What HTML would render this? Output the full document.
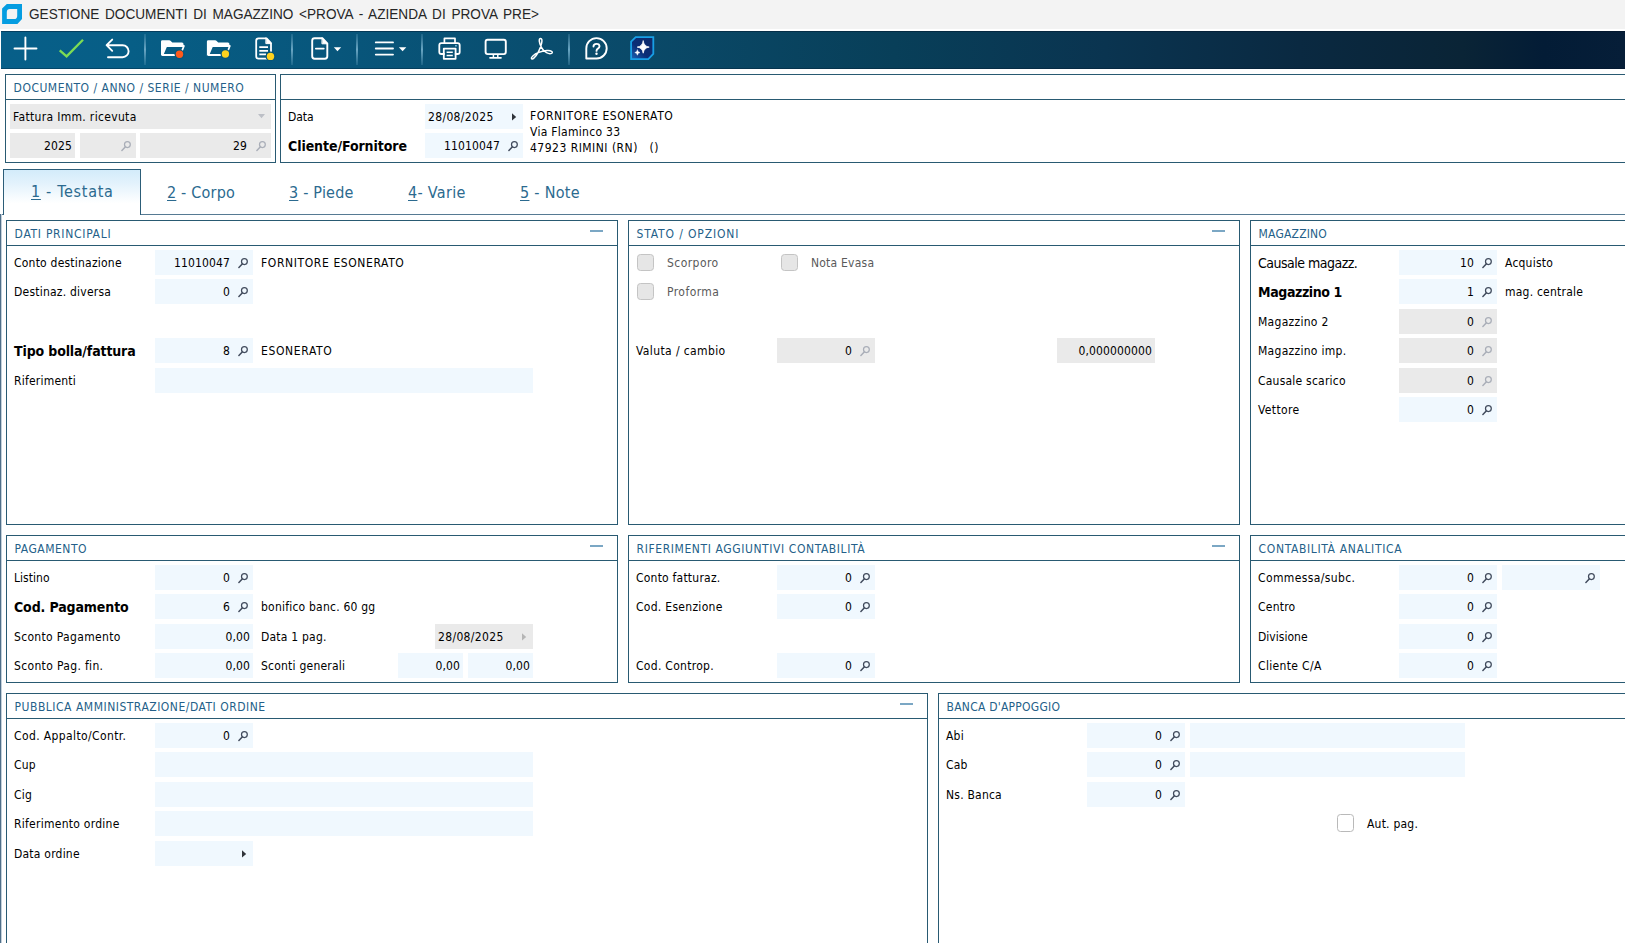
<!DOCTYPE html>
<html lang="it"><head><meta charset="utf-8"><title>GESTIONE DOCUMENTI DI MAGAZZINO</title>
<style>
html,body{margin:0;padding:0}
body{width:1625px;height:943px;overflow:hidden;background:#fff;position:relative;
 font-family:"DejaVu Sans Condensed","Liberation Sans",sans-serif;font-size:12px;color:#000;letter-spacing:.22px}
div,span,svg{position:absolute;box-sizing:border-box;white-space:nowrap}
#tb{left:0;top:0;width:1625px;height:29px;background:#f3f3f3}
#tt{left:29px;top:3px;font-family:"Liberation Sans",sans-serif;font-size:15.5px;letter-spacing:0;word-spacing:2.2px;color:#262626;line-height:22.5px;transform:scaleX(.878);transform-origin:0 0}
#bar{left:1px;top:31px;width:1624px;height:38px;box-shadow:inset 0 1px 0 rgba(0,15,35,.4),inset 0 -1px 0 rgba(0,15,35,.3);background:linear-gradient(90deg,#075f89 0,#075e86 8%,#08557a 22%,#0a4968 40%,#083f59 55%,#0a3450 68%,#0a2941 80%,#0a2436 90%,#031c36 95%,#061e38 100%)}
.sep{top:34px;width:2px;height:32px;background:linear-gradient(90deg,#4f8aa6,#2d6f8f)}
.p{border:1px solid #295a72;background:#fff}
.ph{left:7.6px;top:0;height:24px;line-height:27px;color:#245f89;letter-spacing:.55px;width:auto;right:0;border:0}
.p:after{content:"";position:absolute;left:0;right:0;top:24px;height:1px;background:#295a72}
.col{right:14px;top:9px;width:13px;height:2px;background:#7ba7c4}
.f{overflow:hidden}
.v{top:0;line-height:27px;letter-spacing:.13px}
.l{line-height:27px;height:25px}
.b{line-height:27px;height:25px;font-weight:bold;font-size:14px;letter-spacing:-.2px}
.big{line-height:27px;height:25px;font-size:14px;letter-spacing:-.1px}
.d{line-height:27px;height:25px;letter-spacing:.45px}
.g{line-height:27px;height:25px;color:#5a5a5a}
.tab{top:170px;height:44px;line-height:44px;font-size:16px;color:#2b6a8f;letter-spacing:.15px}
.tab u{text-decoration-thickness:1px;text-underline-offset:2px}
.cb{width:17.8px;height:17.8px;border:1px solid #c4c4c4;border-radius:3.5px;background:#e6e6e6}
</style></head><body>

<div id="tb"></div>
<svg style="left:0;top:0" width="24" height="28" viewBox="0 0 24 28"><path fill="#059de1" fill-rule="evenodd" d="M6.8 4 H22 V18.9 L17.4 23.9 H2.1 V8.6 Z M9.9 9.1 Q6.8 9.1 6.8 12.2 V19.1 H14.1 Q17.2 19.1 17.2 16 V9.1 Z"/></svg>
<div id="tt">GESTIONE DOCUMENTI DI MAGAZZINO &lt;PROVA - AZIENDA DI PROVA PRE&gt;</div>
<div id="bar"></div>
<svg style="left:0;top:31px" width="700" height="38" viewBox="0 31 700 38" fill="none" stroke="#fff" stroke-width="2" stroke-linecap="round" stroke-linejoin="round">
<defs>
<linearGradient id="sg" x1="0" y1="0" x2="0" y2="1"><stop offset="0" stop-color="#5f9dbb" stop-opacity=".25"/><stop offset=".5" stop-color="#6aa6c3"/><stop offset="1" stop-color="#5f9dbb" stop-opacity=".25"/></linearGradient>
<linearGradient id="ai" x1="0" y1="1" x2="1" y2="0"><stop offset="0" stop-color="#1d66b8"/><stop offset=".4" stop-color="#0a2e78"/><stop offset="1" stop-color="#0f2a68"/></linearGradient>
</defs>
<g stroke="none" fill="url(#sg)">
<rect x="144" y="34" width="2" height="31"/><rect x="291" y="34" width="2" height="31"/><rect x="356" y="34" width="2" height="31"/><rect x="421" y="34" width="2" height="31"/><rect x="568" y="34" width="2" height="31"/>
</g>
<!-- plus -->
<path d="M14.5 48.5 H36.5 M25.4 37.5 V59.5" stroke-width="1.9"/>
<!-- check -->
<path d="M60.6 51.2 L66.6 56.4 L82.2 40.6" stroke="#7ddc55" stroke-width="2.3" stroke-linecap="square" stroke-linejoin="miter"/>
<!-- undo -->
<path d="M112.2 39.6 L106.6 45.2 L112.2 50.8 M107 45.2 H122.6 A6 6 0 0 1 122.6 57.2 H108" stroke-width="1.9"/>
<!-- folder red -->
<g id="fold">
<path d="M161 41.6 Q161 40.2 162.4 40.2 H169.3 Q170 40.2 170.5 40.7 L172.3 42.4 H182 Q183.5 42.4 183.5 43.9 V45.6 H166.2 L162.6 54.6 L161 55.8 Z" fill="#fff" stroke="none"/>
<path d="M166.3 46 H183.9 L180.3 55 H162.5 Z" stroke-width="1.8" stroke-linejoin="round"/>
</g>
<circle cx="179.5" cy="54.3" r="4.9" fill="#07567b" stroke="none"/>
<circle cx="179.5" cy="54.3" r="3.7" fill="#ff5a1c" stroke="none"/>
<use href="#fold" x="45.9"/>
<circle cx="225.4" cy="54" r="4.9" fill="#07547a" stroke="none"/>
<circle cx="225.4" cy="54" r="3.7" fill="#ffd21e" stroke="none"/>
<!-- doc yellow -->
<path d="M266.6 38.3 H258.6 Q256.2 38.3 256.2 40.7 V56.3 Q256.2 58.7 258.6 58.7 H268.6 Q271 58.7 271 56.3 V43.2 Z" stroke-width="1.8"/>
<path d="M266.2 38 L271.3 43.6 H266.2Z" fill="#fff" stroke-width="1"/>
<path d="M259.3 47.2 H268 M259.3 50.8 H268 M259.3 54.3 H266" stroke-width="1.7" stroke-linecap="butt"/>
<circle cx="270.5" cy="56.4" r="4.9" fill="#075479" stroke="none"/>
<circle cx="270.5" cy="56.4" r="3.7" fill="#ffd21e" stroke="none"/>
<!-- doc dropdown -->
<path d="M322.6 38.3 H314.6 Q312.2 38.3 312.2 40.7 V56.3 Q312.2 58.7 314.6 58.7 H324.9 Q327.3 58.7 327.3 56.3 V43.4 Z" stroke-width="1.9"/>
<path d="M322.3 38 L327.6 43.8 H322.3Z" fill="#fff" stroke-width="1"/>
<path d="M315.8 48.6 H323.8" stroke-width="1.7"/>
<path d="M333.8 47.2 H341.2 L337.5 51.3Z" fill="#fff" stroke="none"/>
<!-- hamburger -->
<path d="M375.8 42.4 H393 M375.8 48.5 H393 M375.8 54.6 H393" stroke-width="1.9"/>
<path d="M398.9 47.2 H406.3 L402.6 51.3Z" fill="#fff" stroke="none"/>
<!-- printer -->
<path d="M444.4 42.6 V38.4 H455 V42.6" stroke-width="1.7"/>
<path d="M444 54 H441.4 Q439.3 54 439.3 51.9 V45.2 Q439.3 43.1 441.4 43.1 H457.6 Q459.7 43.1 459.7 45.2 V51.9 Q459.7 54 457.6 54 H455.6" stroke-width="1.8"/>
<rect x="443.8" y="48.6" width="11.8" height="10.2" stroke-width="1.8"/>
<path d="M446.6 52.3 H452.8 M446.6 55.4 H452.8" stroke-width="1.5" stroke-linecap="butt"/>
<rect x="455.2" y="45" width="1.5" height="1.5" fill="#8fd0f5" stroke="none"/>
<!-- monitor -->
<rect x="485.6" y="39.7" width="20.2" height="14.4" rx="2" stroke-width="1.9"/>
<path d="M493.4 54.5 V57 M497.8 54.5 V57" stroke-width="1.5" stroke-linecap="butt"/>
<path d="M490 57.8 H501" stroke-width="1.7"/>
<!-- acrobat -->
<path d="M540.6 38.4 C538.6 38.4 538.9 42.6 541.4 47.3 C544 52.2 549 54.6 551.6 53.3 C553.6 52.2 551.2 50.2 546.8 50.6 C541.5 51.1 535.6 53.5 532.6 56.2 C530.2 58.4 531.6 59.9 533.6 58.3 C537 55.6 540.4 48.6 541.6 43.4 C542.3 40.2 541.9 38.4 540.6 38.4Z" stroke-width="1.5"/>
<!-- help -->
<path d="M586.3 58.5 V48.4 A10.2 10.2 0 1 1 596.5 58.5 Z" stroke-width="1.9"/>
<path d="M593.5 46.5 Q593.5 43.9 596.5 43.9 Q599.5 43.9 599.5 46.3 Q599.5 47.8 597.9 48.7 Q596.5 49.5 596.5 50.9" stroke-width="1.9"/>
<circle cx="596.5" cy="53.8" r="1.2" fill="#fff" stroke="none"/>
<!-- AI -->
<path d="M635.7 37.1 H653.3 V53.9 L648.3 59.1 H631.1 V41.7Z" fill="url(#ai)" stroke="#189fe6" stroke-width="1.8" stroke-linejoin="miter"/>
<path d="M643.2 41 Q643.9 46.4 649.2 47.1 Q643.9 47.8 643.2 53.2 Q642.5 47.8 637.2 47.1 Q642.5 46.4 643.2 41Z" fill="#fff" stroke="#fff" stroke-width=".8"/>
<path d="M637.4 50 Q637.7 52.3 640 52.6 Q637.7 52.9 637.4 55.2 Q637.1 52.9 634.8 52.6 Q637.1 52.3 637.4 50Z" fill="#fff" stroke="#fff" stroke-width=".5"/>
</svg>

<div class="p" style="left:5px;top:74px;width:271px;height:89px;"><div class="ph" style="letter-spacing:0.492px;">DOCUMENTO / ANNO / SERIE / NUMERO</div></div>
<div class="p" style="left:280px;top:74px;width:1350px;height:89px;border-right:none;"><div class="ph" style=""></div></div>
<div class="f " style="left:10px;top:104px;width:261px;height:25px;background:#eaeaea"><span class="v" style="left:3px;letter-spacing:0.330px;">Fattura Imm. ricevuta</span></div>
<svg class="mg" style="left:258px;top:114px" width="7" height="5" viewBox="0 0 7 5"><path d="M0 0 H7 L3.5 4.2Z" fill="#bcbfc6"/></svg>
<div class="f " style="left:10px;top:133px;width:65px;height:25px;background:#eaeaea"><span class="v" style="right:3px">2025</span></div>
<div class="f " style="left:80px;top:133px;width:56px;height:25px;background:#eaeaea"></div><svg class="mg" style="left:121px;top:141px" width="11" height="11" viewBox="0 0 11 11"><circle cx="6.4" cy="3.6" r="2.9" fill="none" stroke="#a9aeb8" stroke-width="1.25"/><path d="M4.2 5.9 L0.9 9.5" stroke="#a9aeb8" stroke-width="1.45" stroke-linecap="round"/></svg>
<div class="f " style="left:140px;top:133px;width:131px;height:25px;background:#eaeaea"><span class="v" style="right:24px">29</span></div><svg class="mg" style="left:256px;top:141px" width="11" height="11" viewBox="0 0 11 11"><circle cx="6.4" cy="3.6" r="2.9" fill="none" stroke="#a9aeb8" stroke-width="1.25"/><path d="M4.2 5.9 L0.9 9.5" stroke="#a9aeb8" stroke-width="1.45" stroke-linecap="round"/></svg>
<div class="l" style="left:288px;top:104px;letter-spacing:-0.030px;">Data</div>
<div class="f " style="left:425px;top:104px;width:98px;height:25px;background:#f0f8fe"><span class="v" style="left:3px;letter-spacing:0.340px;">28/08/2025</span></div>
<svg class="mg" style="left:512px;top:113px" width="5" height="8" viewBox="0 0 5 8"><path d="M0 0.2 L4.2 3.9 L0 7.6Z" fill="#30343a"/></svg>
<div class="b" style="left:288px;top:133px;letter-spacing:-0.076px;">Cliente/Fornitore</div>
<div class="f " style="left:425px;top:133px;width:98px;height:25px;background:#f0f8fe"><span class="v" style="right:23px">11010047</span></div><svg class="mg" style="left:508px;top:141px" width="11" height="11" viewBox="0 0 11 11"><circle cx="6.4" cy="3.6" r="2.9" fill="none" stroke="#414b5d" stroke-width="1.25"/><path d="M4.2 5.9 L0.9 9.5" stroke="#414b5d" stroke-width="1.45" stroke-linecap="round"/></svg>
<div class="d" style="left:530px;top:108px;line-height:16px;height:16px;letter-spacing:0.608px;">FORNITORE ESONERATO</div>
<div class="l" style="left:530px;top:124px;line-height:16px;height:16px;letter-spacing:0.287px;">Via Flaminco 33</div>
<div class="l" style="left:530px;top:140px;line-height:16px;height:16px;letter-spacing:0.484px;">47923 RIMINI (RN)&nbsp;&nbsp;&nbsp;()</div>
<div style="left:0;top:214px;width:1625px;height:1px;background:#567a93"></div>
<div style="left:0;top:214px;width:1px;height:740px;background:#4f6f8a"></div><div style="left:1px;top:214px;width:1px;height:740px;background:#c3d0da"></div>
<div style="left:3px;top:169px;width:138px;height:46px;border:1px solid #2c5d78;border-bottom:none;background:linear-gradient(180deg,#d3ebfa 0,#e3f2fc 30%,#f6fbfe 60%,#fff 74%)"></div>
<div class="tab" style="left:31px;top:170px;letter-spacing:0.695px;"><u>1</u> - Testata</div>
<div class="tab" style="left:167px;top:171px;letter-spacing:0.194px;"><u>2</u> - Corpo</div>
<div class="tab" style="left:289px;top:171px;letter-spacing:0.217px;"><u>3</u> - Piede</div>
<div class="tab" style="left:408px;top:171px;letter-spacing:0.312px;"><u>4</u>- Varie</div>
<div class="tab" style="left:520px;top:171px;letter-spacing:0.300px;"><u>5</u> - Note</div>
<div class="p" style="left:6px;top:220px;width:612px;height:305px;"><div class="ph" style="letter-spacing:0.710px;">DATI PRINCIPALI</div><div class="col"></div></div>
<div class="l" style="left:14px;top:250px;">Conto destinazione</div>
<div class="f " style="left:155px;top:250px;width:98px;height:25px;background:#f0f8fe"><span class="v" style="right:23px">11010047</span></div><svg class="mg" style="left:238px;top:258px" width="11" height="11" viewBox="0 0 11 11"><circle cx="6.4" cy="3.6" r="2.9" fill="none" stroke="#414b5d" stroke-width="1.25"/><path d="M4.2 5.9 L0.9 9.5" stroke="#414b5d" stroke-width="1.45" stroke-linecap="round"/></svg>
<div class="d" style="left:261px;top:250px;letter-spacing:0.608px;">FORNITORE ESONERATO</div>
<div class="l" style="left:14px;top:279px;">Destinaz. diversa</div>
<div class="f " style="left:155px;top:279px;width:98px;height:25px;background:#f0f8fe"><span class="v" style="right:23px">0</span></div><svg class="mg" style="left:238px;top:287px" width="11" height="11" viewBox="0 0 11 11"><circle cx="6.4" cy="3.6" r="2.9" fill="none" stroke="#414b5d" stroke-width="1.25"/><path d="M4.2 5.9 L0.9 9.5" stroke="#414b5d" stroke-width="1.45" stroke-linecap="round"/></svg>
<div class="b" style="left:14px;top:338px;letter-spacing:-0.139px;">Tipo bolla/fattura</div>
<div class="f " style="left:155px;top:338px;width:98px;height:25px;background:#f0f8fe"><span class="v" style="right:23px">8</span></div><svg class="mg" style="left:238px;top:346px" width="11" height="11" viewBox="0 0 11 11"><circle cx="6.4" cy="3.6" r="2.9" fill="none" stroke="#414b5d" stroke-width="1.25"/><path d="M4.2 5.9 L0.9 9.5" stroke="#414b5d" stroke-width="1.45" stroke-linecap="round"/></svg>
<div class="d" style="left:261px;top:338px;letter-spacing:0.639px;">ESONERATO</div>
<div class="l" style="left:14px;top:368px;">Riferimenti</div>
<div class="f " style="left:155px;top:368px;width:378px;height:25px;background:#f0f8fe"></div>
<div class="p" style="left:628px;top:220px;width:612px;height:305px;"><div class="ph" style="letter-spacing:0.850px;">STATO / OPZIONI</div><div class="col"></div></div>
<div class="cb" style="left:636.6px;top:253.6px"></div>
<div class="g" style="left:667px;top:250px;letter-spacing:0.445px;">Scorporo</div>
<div class="cb" style="left:780.6px;top:253.6px"></div>
<div class="g" style="left:811px;top:250px;">Nota Evasa</div>
<div class="cb" style="left:636.6px;top:282.6px"></div>
<div class="g" style="left:667px;top:279px;letter-spacing:0.445px;">Proforma</div>
<div class="l" style="left:636px;top:338px;letter-spacing:0.387px;">Valuta / cambio</div>
<div class="f " style="left:777px;top:338px;width:98px;height:25px;background:#eaeaea"><span class="v" style="right:23px">0</span></div><svg class="mg" style="left:860px;top:346px" width="11" height="11" viewBox="0 0 11 11"><circle cx="6.4" cy="3.6" r="2.9" fill="none" stroke="#a9aeb8" stroke-width="1.25"/><path d="M4.2 5.9 L0.9 9.5" stroke="#a9aeb8" stroke-width="1.45" stroke-linecap="round"/></svg>
<div class="f " style="left:1057px;top:338px;width:98px;height:25px;background:#eaeaea"><span class="v" style="right:3px">0,000000000</span></div>
<div class="p" style="left:1250px;top:220px;width:400px;height:305px;border-right:none;"><div class="ph" style="letter-spacing:0.183px;">MAGAZZINO</div></div>
<div class="big" style="left:1258px;top:250px;letter-spacing:-0.507px;">Causale magazz.</div>
<div class="f " style="left:1399px;top:250px;width:98px;height:25px;background:#f0f8fe"><span class="v" style="right:23px">10</span></div><svg class="mg" style="left:1482px;top:258px" width="11" height="11" viewBox="0 0 11 11"><circle cx="6.4" cy="3.6" r="2.9" fill="none" stroke="#414b5d" stroke-width="1.25"/><path d="M4.2 5.9 L0.9 9.5" stroke="#414b5d" stroke-width="1.45" stroke-linecap="round"/></svg>
<div class="l" style="left:1505px;top:250px;">Acquisto</div>
<div class="b" style="left:1258px;top:279px;letter-spacing:-0.391px;">Magazzino 1</div>
<div class="f " style="left:1399px;top:279px;width:98px;height:25px;background:#f0f8fe"><span class="v" style="right:23px">1</span></div><svg class="mg" style="left:1482px;top:287px" width="11" height="11" viewBox="0 0 11 11"><circle cx="6.4" cy="3.6" r="2.9" fill="none" stroke="#414b5d" stroke-width="1.25"/><path d="M4.2 5.9 L0.9 9.5" stroke="#414b5d" stroke-width="1.45" stroke-linecap="round"/></svg>
<div class="l" style="left:1505px;top:279px;">mag. centrale</div>
<div class="l" style="left:1258px;top:309px;letter-spacing:0.284px;">Magazzino 2</div>
<div class="f " style="left:1399px;top:309px;width:98px;height:25px;background:#eaeaea"><span class="v" style="right:23px">0</span></div><svg class="mg" style="left:1482px;top:317px" width="11" height="11" viewBox="0 0 11 11"><circle cx="6.4" cy="3.6" r="2.9" fill="none" stroke="#a9aeb8" stroke-width="1.25"/><path d="M4.2 5.9 L0.9 9.5" stroke="#a9aeb8" stroke-width="1.45" stroke-linecap="round"/></svg>
<div class="l" style="left:1258px;top:338px;letter-spacing:0.284px;">Magazzino imp.</div>
<div class="f " style="left:1399px;top:338px;width:98px;height:25px;background:#eaeaea"><span class="v" style="right:23px">0</span></div><svg class="mg" style="left:1482px;top:346px" width="11" height="11" viewBox="0 0 11 11"><circle cx="6.4" cy="3.6" r="2.9" fill="none" stroke="#a9aeb8" stroke-width="1.25"/><path d="M4.2 5.9 L0.9 9.5" stroke="#a9aeb8" stroke-width="1.45" stroke-linecap="round"/></svg>
<div class="l" style="left:1258px;top:368px;">Causale scarico</div>
<div class="f " style="left:1399px;top:368px;width:98px;height:25px;background:#eaeaea"><span class="v" style="right:23px">0</span></div><svg class="mg" style="left:1482px;top:376px" width="11" height="11" viewBox="0 0 11 11"><circle cx="6.4" cy="3.6" r="2.9" fill="none" stroke="#a9aeb8" stroke-width="1.25"/><path d="M4.2 5.9 L0.9 9.5" stroke="#a9aeb8" stroke-width="1.45" stroke-linecap="round"/></svg>
<div class="l" style="left:1258px;top:397px;letter-spacing:0.377px;">Vettore</div>
<div class="f " style="left:1399px;top:397px;width:98px;height:25px;background:#f0f8fe"><span class="v" style="right:23px">0</span></div><svg class="mg" style="left:1482px;top:405px" width="11" height="11" viewBox="0 0 11 11"><circle cx="6.4" cy="3.6" r="2.9" fill="none" stroke="#414b5d" stroke-width="1.25"/><path d="M4.2 5.9 L0.9 9.5" stroke="#414b5d" stroke-width="1.45" stroke-linecap="round"/></svg>
<div class="p" style="left:6px;top:535px;width:612px;height:148px;"><div class="ph" style="letter-spacing:0.494px;">PAGAMENTO</div><div class="col"></div></div>
<div class="l" style="left:14px;top:565px;letter-spacing:0.034px;">Listino</div>
<div class="f " style="left:155px;top:565px;width:98px;height:25px;background:#f0f8fe"><span class="v" style="right:23px">0</span></div><svg class="mg" style="left:238px;top:573px" width="11" height="11" viewBox="0 0 11 11"><circle cx="6.4" cy="3.6" r="2.9" fill="none" stroke="#414b5d" stroke-width="1.25"/><path d="M4.2 5.9 L0.9 9.5" stroke="#414b5d" stroke-width="1.45" stroke-linecap="round"/></svg>
<div class="b" style="left:14px;top:594px;letter-spacing:-0.121px;">Cod. Pagamento</div>
<div class="f " style="left:155px;top:594px;width:98px;height:25px;background:#f0f8fe"><span class="v" style="right:23px">6</span></div><svg class="mg" style="left:238px;top:602px" width="11" height="11" viewBox="0 0 11 11"><circle cx="6.4" cy="3.6" r="2.9" fill="none" stroke="#414b5d" stroke-width="1.25"/><path d="M4.2 5.9 L0.9 9.5" stroke="#414b5d" stroke-width="1.45" stroke-linecap="round"/></svg>
<div class="l" style="left:261px;top:594px;">bonifico banc. 60 gg</div>
<div class="l" style="left:14px;top:624px;letter-spacing:0.326px;">Sconto Pagamento</div>
<div class="f " style="left:155px;top:624px;width:98px;height:25px;background:#f0f8fe"><span class="v" style="right:3px">0,00</span></div>
<div class="l" style="left:261px;top:624px;">Data 1 pag.</div>
<div class="f " style="left:435px;top:624px;width:98px;height:25px;background:#eaeaea"><span class="v" style="left:3px;letter-spacing:0.340px;">28/08/2025</span></div>
<svg class="mg" style="left:522px;top:633px" width="5" height="8" viewBox="0 0 5 8"><path d="M0 0.2 L4.2 3.9 L0 7.6Z" fill="#b5b5b5"/></svg>
<div class="l" style="left:14px;top:653px;letter-spacing:0.345px;">Sconto Pag. fin.</div>
<div class="f " style="left:155px;top:653px;width:98px;height:25px;background:#f0f8fe"><span class="v" style="right:3px">0,00</span></div>
<div class="l" style="left:261px;top:653px;">Sconti generali</div>
<div class="f " style="left:398px;top:653px;width:65px;height:25px;background:#f0f8fe"><span class="v" style="right:3px">0,00</span></div>
<div class="f " style="left:468px;top:653px;width:65px;height:25px;background:#f0f8fe"><span class="v" style="right:3px">0,00</span></div>
<div class="p" style="left:628px;top:535px;width:612px;height:148px;"><div class="ph" style="letter-spacing:0.588px;">RIFERIMENTI AGGIUNTIVI CONTABILITÀ</div><div class="col"></div></div>
<div class="l" style="left:636px;top:565px;">Conto fatturaz.</div>
<div class="f " style="left:777px;top:565px;width:98px;height:25px;background:#f0f8fe"><span class="v" style="right:23px">0</span></div><svg class="mg" style="left:860px;top:573px" width="11" height="11" viewBox="0 0 11 11"><circle cx="6.4" cy="3.6" r="2.9" fill="none" stroke="#414b5d" stroke-width="1.25"/><path d="M4.2 5.9 L0.9 9.5" stroke="#414b5d" stroke-width="1.45" stroke-linecap="round"/></svg>
<div class="l" style="left:636px;top:594px;letter-spacing:0.291px;">Cod. Esenzione</div>
<div class="f " style="left:777px;top:594px;width:98px;height:25px;background:#f0f8fe"><span class="v" style="right:23px">0</span></div><svg class="mg" style="left:860px;top:602px" width="11" height="11" viewBox="0 0 11 11"><circle cx="6.4" cy="3.6" r="2.9" fill="none" stroke="#414b5d" stroke-width="1.25"/><path d="M4.2 5.9 L0.9 9.5" stroke="#414b5d" stroke-width="1.45" stroke-linecap="round"/></svg>
<div class="l" style="left:636px;top:653px;letter-spacing:0.297px;">Cod. Controp.</div>
<div class="f " style="left:777px;top:653px;width:98px;height:25px;background:#f0f8fe"><span class="v" style="right:23px">0</span></div><svg class="mg" style="left:860px;top:661px" width="11" height="11" viewBox="0 0 11 11"><circle cx="6.4" cy="3.6" r="2.9" fill="none" stroke="#414b5d" stroke-width="1.25"/><path d="M4.2 5.9 L0.9 9.5" stroke="#414b5d" stroke-width="1.45" stroke-linecap="round"/></svg>
<div class="p" style="left:1250px;top:535px;width:400px;height:148px;border-right:none;"><div class="ph" style="letter-spacing:0.640px;">CONTABILITÀ ANALITICA</div></div>
<div class="l" style="left:1258px;top:565px;letter-spacing:0.384px;">Commessa/subc.</div>
<div class="f " style="left:1399px;top:565px;width:98px;height:25px;background:#f0f8fe"><span class="v" style="right:23px">0</span></div><svg class="mg" style="left:1482px;top:573px" width="11" height="11" viewBox="0 0 11 11"><circle cx="6.4" cy="3.6" r="2.9" fill="none" stroke="#414b5d" stroke-width="1.25"/><path d="M4.2 5.9 L0.9 9.5" stroke="#414b5d" stroke-width="1.45" stroke-linecap="round"/></svg>
<div class="f " style="left:1502px;top:565px;width:98px;height:25px;background:#f0f8fe"></div><svg class="mg" style="left:1585px;top:573px" width="11" height="11" viewBox="0 0 11 11"><circle cx="6.4" cy="3.6" r="2.9" fill="none" stroke="#414b5d" stroke-width="1.25"/><path d="M4.2 5.9 L0.9 9.5" stroke="#414b5d" stroke-width="1.45" stroke-linecap="round"/></svg>
<div class="l" style="left:1258px;top:594px;">Centro</div>
<div class="f " style="left:1399px;top:594px;width:98px;height:25px;background:#f0f8fe"><span class="v" style="right:23px">0</span></div><svg class="mg" style="left:1482px;top:602px" width="11" height="11" viewBox="0 0 11 11"><circle cx="6.4" cy="3.6" r="2.9" fill="none" stroke="#414b5d" stroke-width="1.25"/><path d="M4.2 5.9 L0.9 9.5" stroke="#414b5d" stroke-width="1.45" stroke-linecap="round"/></svg>
<div class="l" style="left:1258px;top:624px;letter-spacing:0.020px;">Divisione</div>
<div class="f " style="left:1399px;top:624px;width:98px;height:25px;background:#f0f8fe"><span class="v" style="right:23px">0</span></div><svg class="mg" style="left:1482px;top:632px" width="11" height="11" viewBox="0 0 11 11"><circle cx="6.4" cy="3.6" r="2.9" fill="none" stroke="#414b5d" stroke-width="1.25"/><path d="M4.2 5.9 L0.9 9.5" stroke="#414b5d" stroke-width="1.45" stroke-linecap="round"/></svg>
<div class="l" style="left:1258px;top:653px;letter-spacing:0.338px;">Cliente C/A</div>
<div class="f " style="left:1399px;top:653px;width:98px;height:25px;background:#f0f8fe"><span class="v" style="right:23px">0</span></div><svg class="mg" style="left:1482px;top:661px" width="11" height="11" viewBox="0 0 11 11"><circle cx="6.4" cy="3.6" r="2.9" fill="none" stroke="#414b5d" stroke-width="1.25"/><path d="M4.2 5.9 L0.9 9.5" stroke="#414b5d" stroke-width="1.45" stroke-linecap="round"/></svg>
<div class="p" style="left:6px;top:693px;width:922px;height:300px;border-bottom:none;"><div class="ph" style="letter-spacing:0.506px;">PUBBLICA AMMINISTRAZIONE/DATI ORDINE</div><div class="col"></div></div>
<div class="l" style="left:14px;top:723px;letter-spacing:0.388px;">Cod. Appalto/Contr.</div>
<div class="f " style="left:155px;top:723px;width:98px;height:25px;background:#f0f8fe"><span class="v" style="right:23px">0</span></div><svg class="mg" style="left:238px;top:731px" width="11" height="11" viewBox="0 0 11 11"><circle cx="6.4" cy="3.6" r="2.9" fill="none" stroke="#414b5d" stroke-width="1.25"/><path d="M4.2 5.9 L0.9 9.5" stroke="#414b5d" stroke-width="1.45" stroke-linecap="round"/></svg>
<div class="l" style="left:14px;top:752px;">Cup</div>
<div class="f " style="left:155px;top:752px;width:378px;height:25px;background:#f0f8fe"></div>
<div class="l" style="left:14px;top:782px;">Cig</div>
<div class="f " style="left:155px;top:782px;width:378px;height:25px;background:#f0f8fe"></div>
<div class="l" style="left:14px;top:811px;letter-spacing:0.264px;">Riferimento ordine</div>
<div class="f " style="left:155px;top:811px;width:378px;height:25px;background:#f0f8fe"></div>
<div class="l" style="left:14px;top:841px;">Data ordine</div>
<div class="f " style="left:155px;top:841px;width:98px;height:25px;background:#f0f8fe"></div>
<svg class="mg" style="left:242px;top:850px" width="5" height="8" viewBox="0 0 5 8"><path d="M0 0.2 L4.2 3.9 L0 7.6Z" fill="#30343a"/></svg>
<div class="p" style="left:938px;top:693px;width:700px;height:300px;border-right:none;border-bottom:none;"><div class="ph" style="letter-spacing:0.238px;">BANCA D'APPOGGIO</div></div>
<div class="l" style="left:946px;top:723px;">Abi</div>
<div class="f " style="left:1087px;top:723px;width:98px;height:25px;background:#f0f8fe"><span class="v" style="right:23px">0</span></div><svg class="mg" style="left:1170px;top:731px" width="11" height="11" viewBox="0 0 11 11"><circle cx="6.4" cy="3.6" r="2.9" fill="none" stroke="#414b5d" stroke-width="1.25"/><path d="M4.2 5.9 L0.9 9.5" stroke="#414b5d" stroke-width="1.45" stroke-linecap="round"/></svg>
<div class="f " style="left:1190px;top:723px;width:275px;height:25px;background:#f0f8fe"></div>
<div class="l" style="left:946px;top:752px;">Cab</div>
<div class="f " style="left:1087px;top:752px;width:98px;height:25px;background:#f0f8fe"><span class="v" style="right:23px">0</span></div><svg class="mg" style="left:1170px;top:760px" width="11" height="11" viewBox="0 0 11 11"><circle cx="6.4" cy="3.6" r="2.9" fill="none" stroke="#414b5d" stroke-width="1.25"/><path d="M4.2 5.9 L0.9 9.5" stroke="#414b5d" stroke-width="1.45" stroke-linecap="round"/></svg>
<div class="f " style="left:1190px;top:752px;width:275px;height:25px;background:#f0f8fe"></div>
<div class="l" style="left:946px;top:782px;">Ns. Banca</div>
<div class="f " style="left:1087px;top:782px;width:98px;height:25px;background:#f0f8fe"><span class="v" style="right:23px">0</span></div><svg class="mg" style="left:1170px;top:790px" width="11" height="11" viewBox="0 0 11 11"><circle cx="6.4" cy="3.6" r="2.9" fill="none" stroke="#414b5d" stroke-width="1.25"/><path d="M4.2 5.9 L0.9 9.5" stroke="#414b5d" stroke-width="1.45" stroke-linecap="round"/></svg>
<div class="cb" style="left:1336.6px;top:814.4px;background:#fff;border-color:#b9b9b9;border-width:1.3px"></div>
<div class="l" style="left:1367px;top:811px;">Aut. pag.</div>
</body></html>
